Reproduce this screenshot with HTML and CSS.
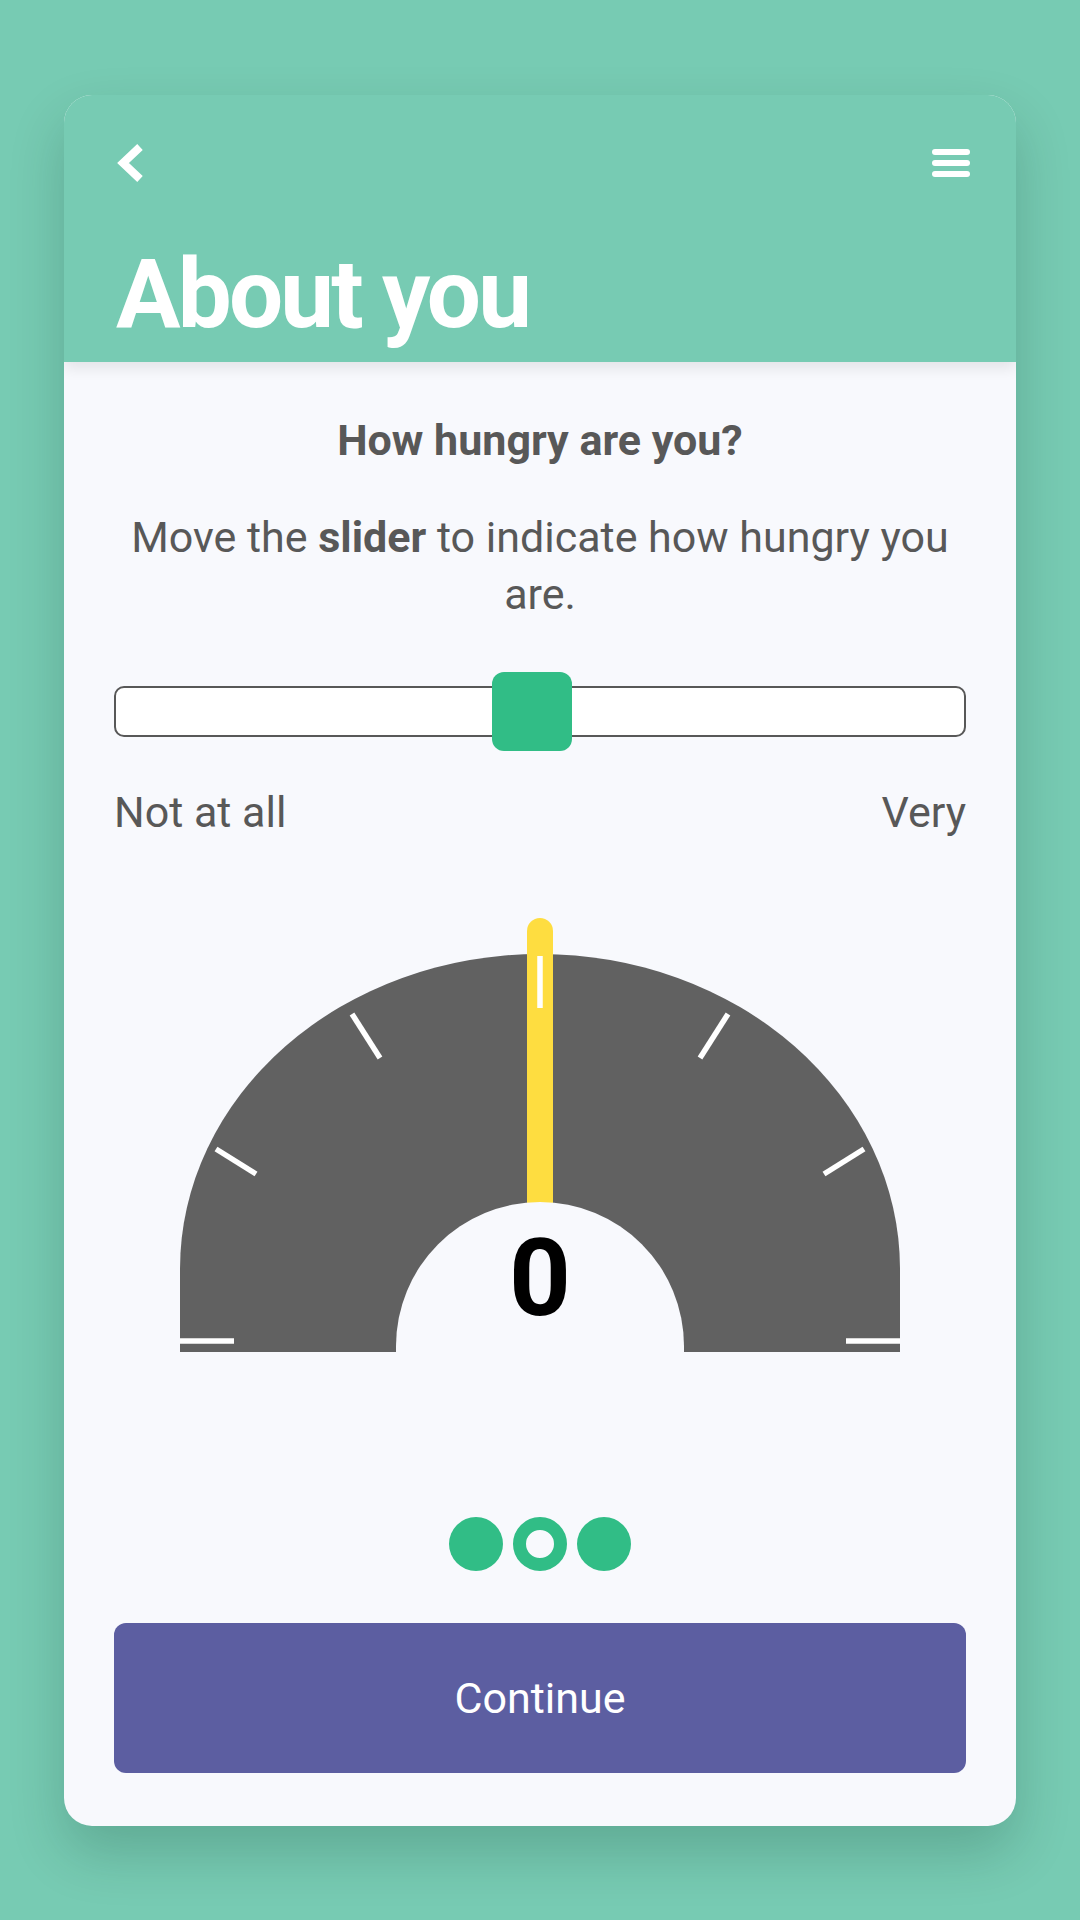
FILE: index.html
```html
<!DOCTYPE html>
<html lang="en">
<head>
    <meta charset="UTF-8">
    <meta name="viewport" content="width=device-width, initial-scale=1.0">
    <title>About you</title>
    <link rel="stylesheet" href="styles.css">
</head>
<body>

<div class="card">
    <div class="header">
        <div class="topbar">
            <svg class="back" width="28" height="38" viewBox="0 0 28 38">
                <polyline points="23,3 6,19 23,35" fill="none" stroke="#fff" stroke-width="8"/>
            </svg>
            <div class="menu">
                <span></span><span></span><span></span>
            </div>
        </div>
        <h1>About you</h1>
    </div>

    <div class="content">
        <h2>How hungry are you?</h2>
        <p class="hint">Move the <b>slider</b> to indicate how hungry you are.</p>

        <div class="slider">
            <div class="track"></div>
            <div class="thumb"></div>
        </div>
        <div class="labels">
            <span>Not at all</span>
            <span>Very</span>
        </div>

        <svg class="gauge" width="720" height="434" viewBox="0 0 720 434">
            <path d="M0,434 L0,351 A360,315 0 0 1 720,351 L720,434 Z" fill="#616161"/>
            <rect x="347" y="0" width="26" height="320" rx="13" fill="#fedd40"/>
            <path d="M216,434 L216,428 A144,144 0 0 1 504,428 L504,434 Z" fill="#f8f9fd"/>
            <g stroke="#fff" stroke-width="5.5">
                <line x1="0" y1="423" x2="54" y2="423"/>
                <line x1="36" y1="231" x2="76" y2="256"/>
                <line x1="172" y1="96" x2="200" y2="140"/>
                <line x1="360" y1="38" x2="360" y2="90"/>
                <line x1="548" y1="96" x2="520" y2="140"/>
                <line x1="684" y1="231" x2="644" y2="256"/>
                <line x1="666" y1="423" x2="720" y2="423"/>
            </g>
            <text x="360" y="397" text-anchor="middle" class="value">0</text>
        </svg>

        <div class="dots">
            <span class="dot"></span>
            <span class="dot current"></span>
            <span class="dot"></span>
        </div>

        <button class="continue">Continue</button>
    </div>
</div>

</body>
</html>
```

FILE: styles.css
```css
body {
    font-family: Roboto, "Liberation Sans", sans-serif;
    background-color: #77cbb3;
    margin: 0;
    padding: 95px 64px 0;
    height: 1920px;
    box-sizing: border-box;
}
.card {
    background: #f8f9fd;
    border-radius: 28px;
    height: 1731px;
    overflow: hidden;
    box-shadow: 0 26px 55px rgba(0, 40, 25, 0.2);
}
.header {
    position: relative;
    background: #77cbb3;
    padding: 49px 46px 21px 52px;
    box-shadow: 0 6px 14px rgba(0, 0, 0, 0.09);
}
.topbar {
    display: flex;
    justify-content: space-between;
    align-items: center;
    height: 38px;
}
.back {
    display: block;
    margin-left: 1px;
}
.menu {
    display: flex;
    flex-direction: column;
    gap: 4.5px;
    width: 38px;
}
.menu span {
    height: 6.5px;
    background: #fff;
    border-radius: 3px;
}
h1 {
    margin: 65px 0 0;
    font-size: 96px;
    line-height: 94px;
    font-weight: 700;
    color: #fff;
    letter-spacing: -2.8px;
}
.content {
    padding: 0 50px;
    color: #585858;
    font-size: 43px;
    line-height: 57px;
}
h2 {
    margin: 50px 0 0;
    font-size: 43px;
    font-weight: 700;
    text-align: center;
}
.hint {
    margin: 40px 0 0;
    text-align: center;
}
.slider {
    position: relative;
    margin-top: 49px;
    height: 79px;
    display: flex;
    align-items: center;
}
.track {
    flex: 1;
    height: 47px;
    border: 2px solid #585858;
    border-radius: 10px;
    background: #fff;
}
.thumb {
    position: absolute;
    left: 378px;
    top: 0;
    width: 80px;
    height: 79px;
    border-radius: 12px;
    background: #31bd86;
}
.labels {
    display: flex;
    justify-content: space-between;
    margin-top: 33px;
}
.gauge {
    display: block;
    margin: 77px auto 0;
}
.value {
    font-family: Roboto, "Liberation Sans", sans-serif;
    font-size: 108px;
    font-weight: 700;
    fill: #000;
}
.dots {
    display: flex;
    justify-content: center;
    gap: 10px;
    margin-top: 165px;
}
.dot {
    width: 54px;
    height: 54px;
    border-radius: 50%;
    background: #31bd86;
    box-sizing: border-box;
}
.dot.current {
    background: #f8f9fd;
    border: 13.5px solid #31bd86;
}
.continue {
    display: block;
    width: 100%;
    height: 150px;
    margin-top: 52px;
    border: none;
    border-radius: 12px;
    background: #5c5ea1;
    color: #fff;
    font-family: Roboto, "Liberation Sans", sans-serif;
    font-size: 43px;
}
```
